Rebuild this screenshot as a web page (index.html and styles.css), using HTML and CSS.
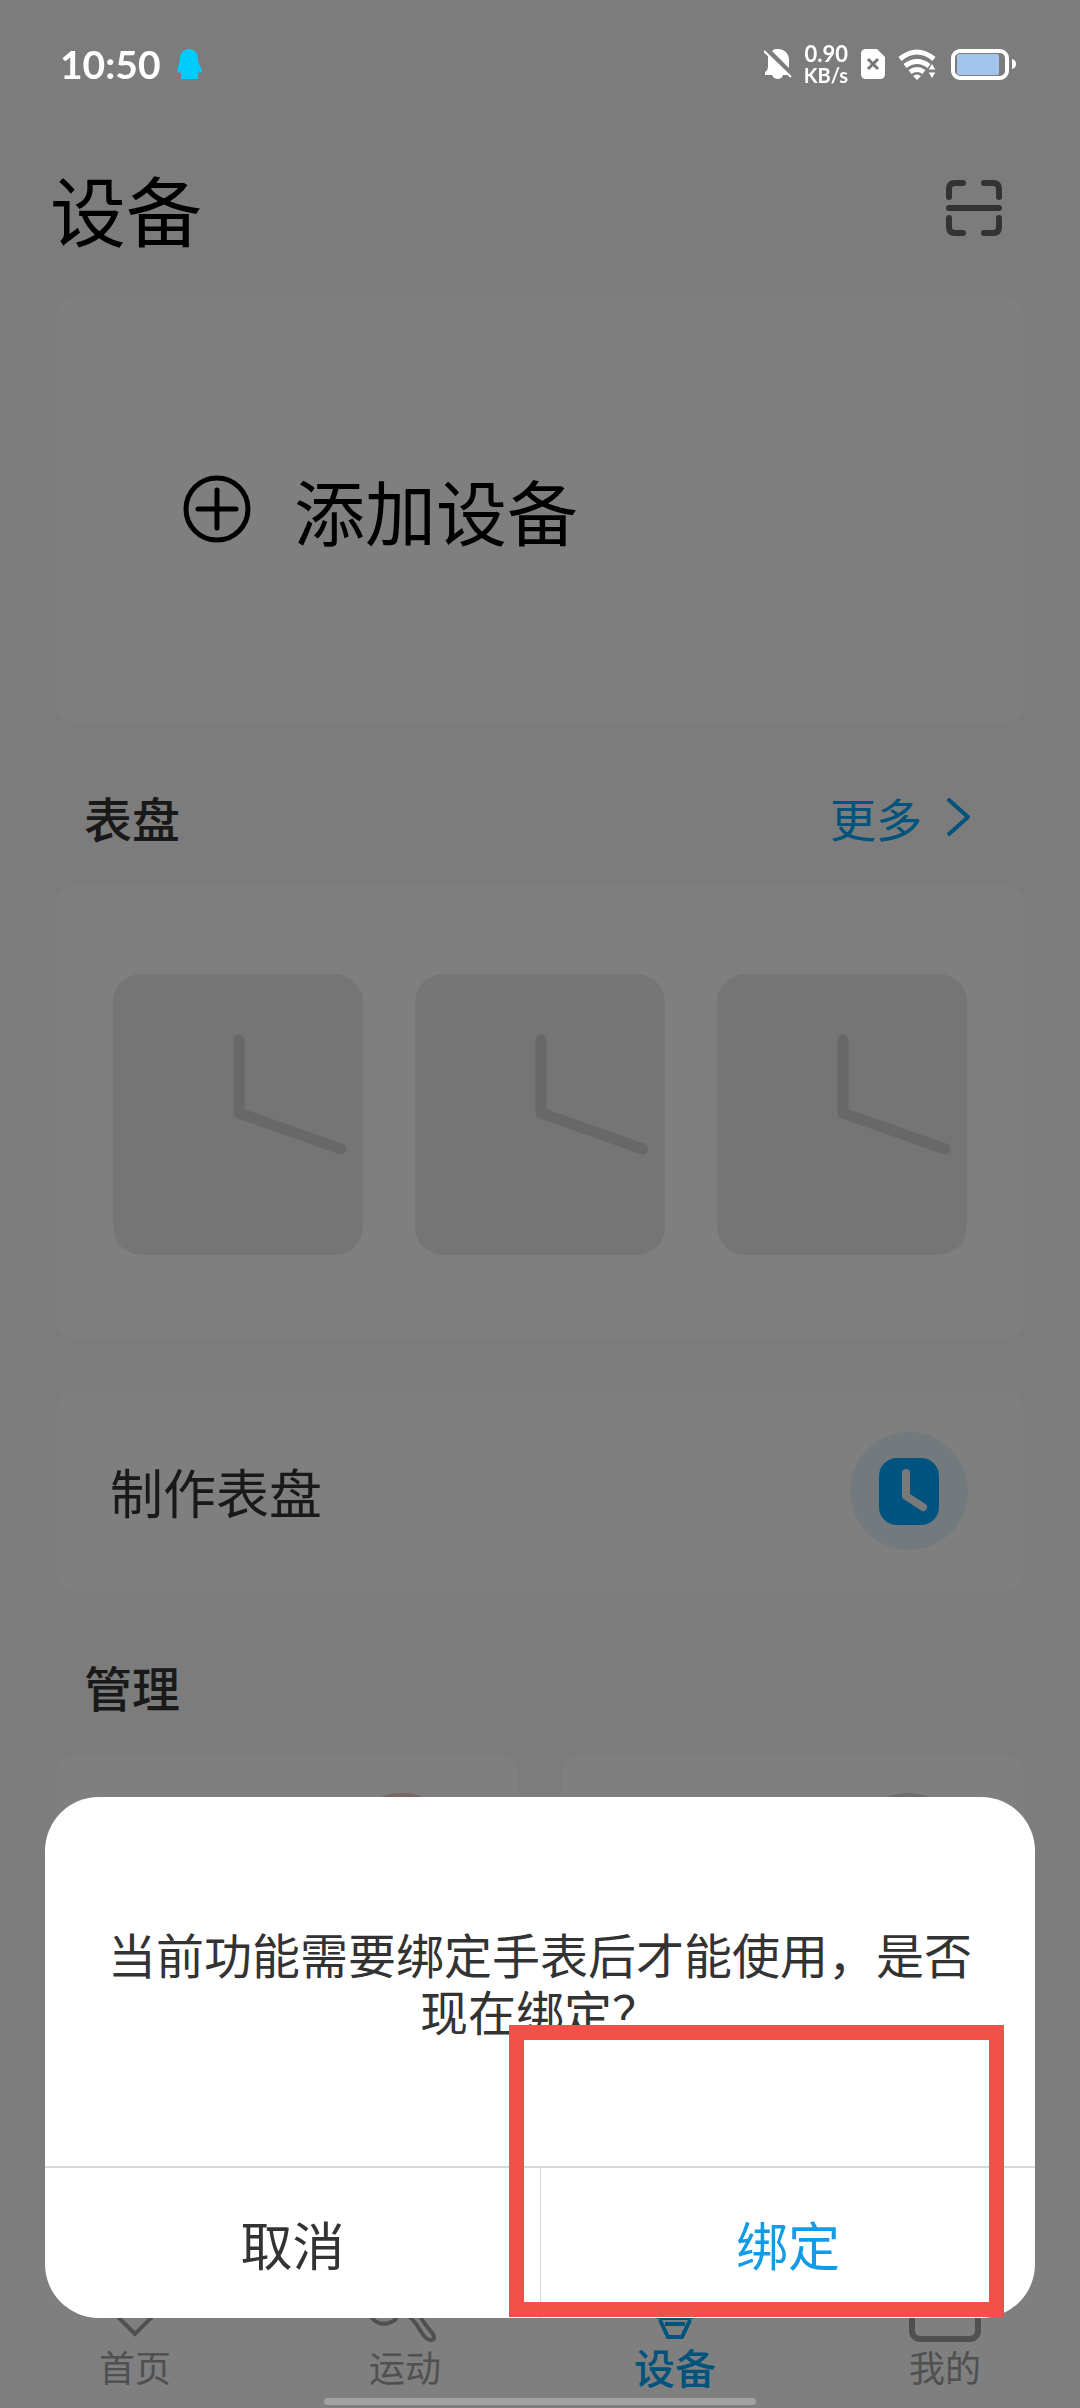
FILE: index.html
```
<!DOCTYPE html>
<html lang="zh-CN">
<head>
    <meta charset="UTF-8">
    <meta name="viewport" content="width=device-width, initial-scale=1.0">
    <title>设备</title>
    <link rel="stylesheet" href="styles.css">
</head>
<body>

<!-- Status bar -->
<div class="status-bar">
    <span class="time">10:50</span>
    <svg class="penguin" width="28" height="32" viewBox="0 0 28 32">
        <path fill="#00cbff" d="M14 1c5 0 9 4 9 9 0 3 0 4 1 6 2 3 3 6 3 8 0 1-1 1-2 0l-1-1-1 3v5H6v-5l-1-3-1 1c-1 1-2 1-2 0 0-2 1-5 2-8 1-2 1-3 1-6 0-5 4-9 9-9z"/>
    </svg>
    <div class="status-icons">
        <svg width="28" height="32" viewBox="0 0 28 32">
            <path fill="#fff" d="M8 3c2-2 4-2 6-2 7 0 11 5 11 11v8zM4 7l20 20h-5c-1 3-3 4-5 4s-5-1-6-4H1v-3c2-1 3-3 3-6z"/>
            <path stroke="#fff" stroke-width="2" d="M0 3l27 26"/>
        </svg>
        <div class="net-speed">
            <span class="speed">0.90</span>
            <span class="unit">KB/s</span>
        </div>
        <svg width="26" height="32" viewBox="0 0 26 32">
            <path fill="#fff" d="M6 1h11l8 8v17q0 5-5 5H6q-5 0-5-5V6q0-5 5-5z"/>
            <path stroke="#777" stroke-width="3" d="M8 11l10 10M18 11L8 21"/>
        </svg>
        <svg width="38" height="32" viewBox="0 0 38 32">
            <g fill="none" stroke="#fff" stroke-width="5">
                <path d="M2 11Q19-3 36 11"/>
                <path d="M7 18q12-9 24 0"/>
                <path d="M12 24q7-5 14 0"/>
            </g>
            <path fill="#fff" d="M15 28q4-3 8 0l-4 4z"/>
            <path fill="#fff" stroke="#7c7c7c" d="M34 15l4 7h-8zM30 24h8l-4 7z"/>
        </svg>
        <svg width="68" height="32" viewBox="0 0 68 32">
            <rect x="5" y="3" width="54" height="27" rx="7" fill="none" stroke="#fff" stroke-width="4"/>
            <rect x="9" y="6" width="42" height="21" rx="2" fill="#a3c4ec"/>
            <path fill="#fff" d="M64 11q4 1 4 5t-4 5z"/>
        </svg>
    </div>
</div>

<header class="page-header">
    <h1>设备</h1>
    <button type="button" class="scan-btn" aria-label="扫一扫">
        <svg width="56" height="56" viewBox="0 0 56 56" fill="none" stroke="#666" stroke-width="6" stroke-linecap="round">
            <path d="M3 17v-8q0-6 6-6h8M38 3h9q6 0 6 6v8M53 38v9q0 6-6 6h-9M17 53H9q-6 0-6-6v-9M3 28h50"/>
        </svg>
    </button>
</header>

<main>
    <!-- Add device -->
    <button type="button" class="card add-device">
        <svg width="70" height="70" viewBox="0 0 70 70" fill="none" stroke="#000" stroke-width="5" stroke-linecap="round">
            <circle cx="35" cy="35" r="31"/>
            <path d="M35 16v38M16 35h38"/>
        </svg>
        <span>添加设备</span>
    </button>

    <!-- Watch faces -->
    <div class="section-head">
        <h2>表盘</h2>
        <a href="#" class="more">更多
            <svg width="26" height="40" viewBox="0 0 26 40" fill="none" stroke="currentColor" stroke-width="4" stroke-linecap="round" stroke-linejoin="round">
                <path d="M3 3l19 17L3 37"/>
            </svg>
        </a>
    </div>
    <section class="card faces">
        <div class="face">
            <svg viewBox="0 0 250 281"><path d="M126 66v73l102 36"/></svg>
        </div>
        <div class="face">
            <svg viewBox="0 0 250 281"><path d="M126 66v73l102 36"/></svg>
        </div>
        <div class="face">
            <svg viewBox="0 0 250 281"><path d="M126 66v73l102 36"/></svg>
        </div>
    </section>

    <button type="button" class="card make-face">
        <span>制作表盘</span>
        <svg width="118" height="118" viewBox="0 0 118 118">
            <circle cx="59" cy="59" r="59" fill="#e4f5fa"/>
            <rect x="29" y="26" width="60" height="67" rx="18" fill="#00a8ff"/>
            <path d="M56 41v23l17 11" fill="none" stroke="#f2f2f2" stroke-width="8" stroke-linecap="round" stroke-linejoin="round"/>
        </svg>
    </button>

    <!-- Management -->
    <div class="section-head">
        <h2>管理</h2>
    </div>
    <div class="manage-grid">
        <div class="card manage-item"><span class="dot pink"></span></div>
        <div class="card manage-item"><span class="dot gray"></span></div>
    </div>
</main>

<nav class="tab-bar">
    <a href="#">
        <svg width="80" height="76" viewBox="0 0 80 76"><path d="M40 68L12 40V14q0-6 6-6h44q6 0 6 6v26z"/></svg>
        <span>首页</span>
    </a>
    <a href="#">
        <svg width="80" height="76" viewBox="0 0 80 76"><path d="M4 48q10 16 26 6l10-16q12 6 20 20l8 10q3 6-3 6-4 0-10-10-8-14-18-18"/></svg>
        <span>运动</span>
    </a>
    <a href="#" class="active">
        <svg width="80" height="76" viewBox="0 0 80 76"><path d="M25 54l8 17h14l8-17M30 58h20"/><rect x="18" y="12" width="44" height="40" rx="10"/></svg>
        <span>设备</span>
    </a>
    <a href="#">
        <svg width="80" height="76" viewBox="0 0 80 76"><rect class="thick" x="7" y="10" width="66" height="63" rx="8"/></svg>
        <span>我的</span>
    </a>
</nav>

<div class="overlay"></div>
<div class="home-indicator"></div>

<!-- Bind dialog -->
<div class="dialog" role="dialog" aria-labelledby="dialog-text">
    <p id="dialog-text">当前功能需要绑定手表后才能使用，是否现在绑定？</p>
    <div class="dialog-actions">
        <button type="button" class="cancel">取消</button>
        <button type="button" class="confirm">绑定</button>
    </div>
    <div class="highlight"></div>
</div>

</body>
</html>
```

FILE: styles.css
```
* {
    box-sizing: border-box;
    margin: 0;
    padding: 0;
}

body {
    min-height: 100vh;
    background: #f8f8f8;
    font-family: "Noto Sans CJK SC", sans-serif;
    color: #000;
}

button {
    border: none;
    background: none;
    font: inherit;
    color: inherit;
    cursor: pointer;
}

a {
    color: inherit;
    text-decoration: none;
}

svg {
    display: block;
}

/* Status bar, stays bright above the overlay */
.status-bar {
    position: relative;
    z-index: 2;
    display: flex;
    align-items: center;
    height: 128px;
    padding: 0 64px 0 60px;
    color: #fff;
    font-family: Lato, sans-serif;
    font-weight: 700;
}

.time {
    font-size: 39px;
}

.penguin {
    margin-left: 14px;
}

.status-icons {
    display: flex;
    align-items: center;
    gap: 12px;
    margin-left: auto;
}

.net-speed {
    display: flex;
    flex-direction: column;
    align-items: flex-end;
    font-size: 20px;
    line-height: 20px;
}

.speed {
    font-size: 22px;
    line-height: 22px;
}

/* Header */
.page-header {
    display: flex;
    justify-content: space-between;
    align-items: center;
    height: 168px;
    padding: 0 78px 8px 50px;
}

.page-header h1 {
    font-size: 76px;
    font-weight: 400;
}

/* Cards */
main {
    padding: 0 56px;
}

.card {
    background: #fff;
    border-radius: 20px;
}

.add-device {
    display: flex;
    align-items: center;
    gap: 42px;
    width: 100%;
    height: 426px;
    padding: 0 126px;
    font-size: 71px;
}

.section-head {
    display: flex;
    justify-content: space-between;
    align-items: center;
    height: 164px;
    padding: 26px 52px 0 28px;
}

.section-head h2 {
    font-size: 48px;
    font-weight: 500;
    color: #333;
}

.more {
    display: flex;
    align-items: center;
    gap: 24px;
    font-size: 46px;
    color: #00a6f4;
}

.faces {
    display: grid;
    grid-template-columns: repeat(3, 1fr);
    gap: 52px;
    padding: 88px 57px 84px;
    margin-bottom: 52px;
}

.face {
    background: #ebebeb;
    border-radius: 28px;
}

.face path {
    fill: none;
    stroke: #d0d0d0;
    stroke-width: 11;
    stroke-linecap: round;
    stroke-linejoin: round;
}

.make-face {
    display: flex;
    justify-content: space-between;
    align-items: center;
    width: 100%;
    height: 200px;
    padding: 0 56px 0 54px;
    font-size: 53px;
    color: #333;
}

.manage-grid {
    display: grid;
    grid-template-columns: 1fr 1fr;
    gap: 44px;
}

.manage-item {
    display: flex;
    justify-content: flex-end;
    height: 200px;
    padding: 38px 57px;
}

.dot {
    width: 118px;
    height: 118px;
    border-radius: 50%;
}

.pink {
    background: #f0cccf;
}

.gray {
    background: #dcdcdc;
}

/* Tab bar */
.tab-bar {
    position: fixed;
    left: 0;
    right: 0;
    bottom: 0;
    display: grid;
    grid-template-columns: repeat(4, 1fr);
    height: 168px;
    padding: 26px 0 21px;
    background: #fff;
    font-size: 36px;
    line-height: 48px;
    color: #a0a0a0;
}

.tab-bar a {
    display: flex;
    flex-direction: column;
    justify-content: space-between;
    align-items: center;
}

.tab-bar svg {
    fill: none;
    stroke: currentColor;
    stroke-width: 4;
}

.tab-bar .thick {
    stroke-width: 6;
}

.tab-bar .active {
    font-size: 41px;
    font-weight: 500;
    color: #00a6f4;
}

.overlay {
    position: fixed;
    inset: 0;
    z-index: 1;
    background: rgba(0, 0, 0, 0.5);
}

.home-indicator {
    position: fixed;
    left: 30%;
    right: 30%;
    bottom: 3px;
    z-index: 2;
    height: 7px;
    border-radius: 4px;
    background: #a2a2a2;
}

/* Dialog */
.dialog {
    position: fixed;
    left: 45px;
    right: 45px;
    bottom: 90px;
    z-index: 3;
    background: #fff;
    border-radius: 54px;
    color: #333;
}

.dialog p {
    padding: 128px 55px 127px;
    font-size: 48px;
    line-height: 57px;
    text-align: center;
}

.dialog-actions {
    display: grid;
    grid-template-columns: 1fr 1fr;
    height: 152px;
    border-top: 2px solid #d8d8d8;
    font-size: 52px;
}

.confirm {
    border-left: 1px solid #d8d8d8;
    color: #129ce8;
}

.highlight {
    position: absolute;
    right: 31px;
    bottom: 1px;
    width: 50%;
    height: 292px;
    border: 15px solid #f0524a;
    pointer-events: none;
}
```
